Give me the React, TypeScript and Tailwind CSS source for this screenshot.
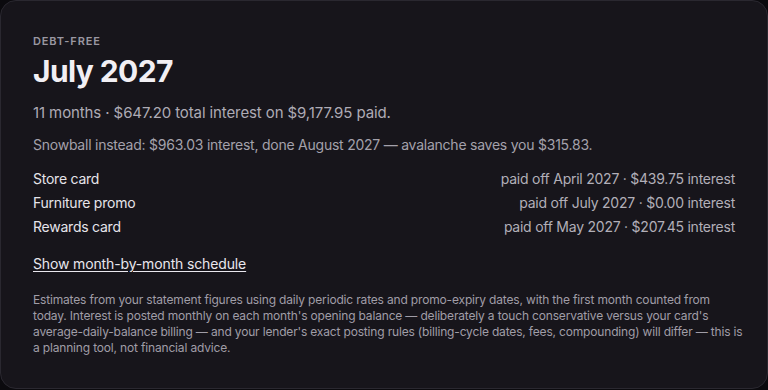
import React from "react";

const rows = [
  { name: "Store card", detail: "paid off April 2027 · $439.75 interest" },
  { name: "Furniture promo", detail: "paid off July 2027 · $0.00 interest" },
  { name: "Rewards card", detail: "paid off May 2027 · $207.45 interest" },
];

const footerLines = [
  "Estimates from your statement figures using daily periodic rates and promo-expiry dates, with the first month counted from",
  "today. Interest is posted monthly on each month's opening balance — deliberately a touch conservative versus your card's",
  "average-daily-balance billing — and your lender's exact posting rules (billing-cycle dates, fees, compounding) will differ — this is",
  "a planning tool, not financial advice.",
];

export default function App() {
  return (
    <div
      className="min-h-[390px] w-[768px] bg-[#0b0a0e]"
      style={{ fontFamily: "Inter, 'Noto Sans', sans-serif" }}
    >
      <div className="rounded-2xl border border-[#2a2830] bg-[#17151b] p-8">
        <div className="text-[11px] font-semibold uppercase leading-4 tracking-[0.08em] text-[#9a97a2]">
          Debt-free
        </div>
        <div className="mt-1 text-[30px] font-bold leading-9 tracking-[-0.02em] text-[#f1eff4]">
          July 2027
        </div>
        <div className="mt-3 text-[15px] leading-6 tracking-[-0.007em] text-[#aeabb5]">
          11 months · $647.20 total interest on $9,177.95 paid.
        </div>
        <div className="mt-2.5 text-sm leading-5 tracking-[-0.017em] text-[#a4a1ab]">
          Snowball instead: $963.03 interest, done August 2027 — avalanche saves you $315.83.
        </div>
        <div className="mt-3 flex flex-col">
          {rows.map((r) => (
            <div key={r.name} className="flex justify-between text-sm leading-6 tracking-[-0.017em]">
              <span className="text-[#e6e4ea]">{r.name}</span>
              <span className="text-[#b2afb8]">{r.detail}</span>
            </div>
          ))}
        </div>
        <div className="mt-3">
          <a className="text-sm leading-6 tracking-[-0.01em] text-[#e9e7ee] underline underline-offset-2">
            Show month-by-month schedule
          </a>
        </div>
        <p className="mt-4 whitespace-nowrap text-xs leading-4 tracking-[-0.014em] text-[#a09da7]">
          {footerLines.map((l, i) => (
            <React.Fragment key={i}>
              {l}
              {i < footerLines.length - 1 && <br />}
            </React.Fragment>
          ))}
        </p>
      </div>
    </div>
  );
}
